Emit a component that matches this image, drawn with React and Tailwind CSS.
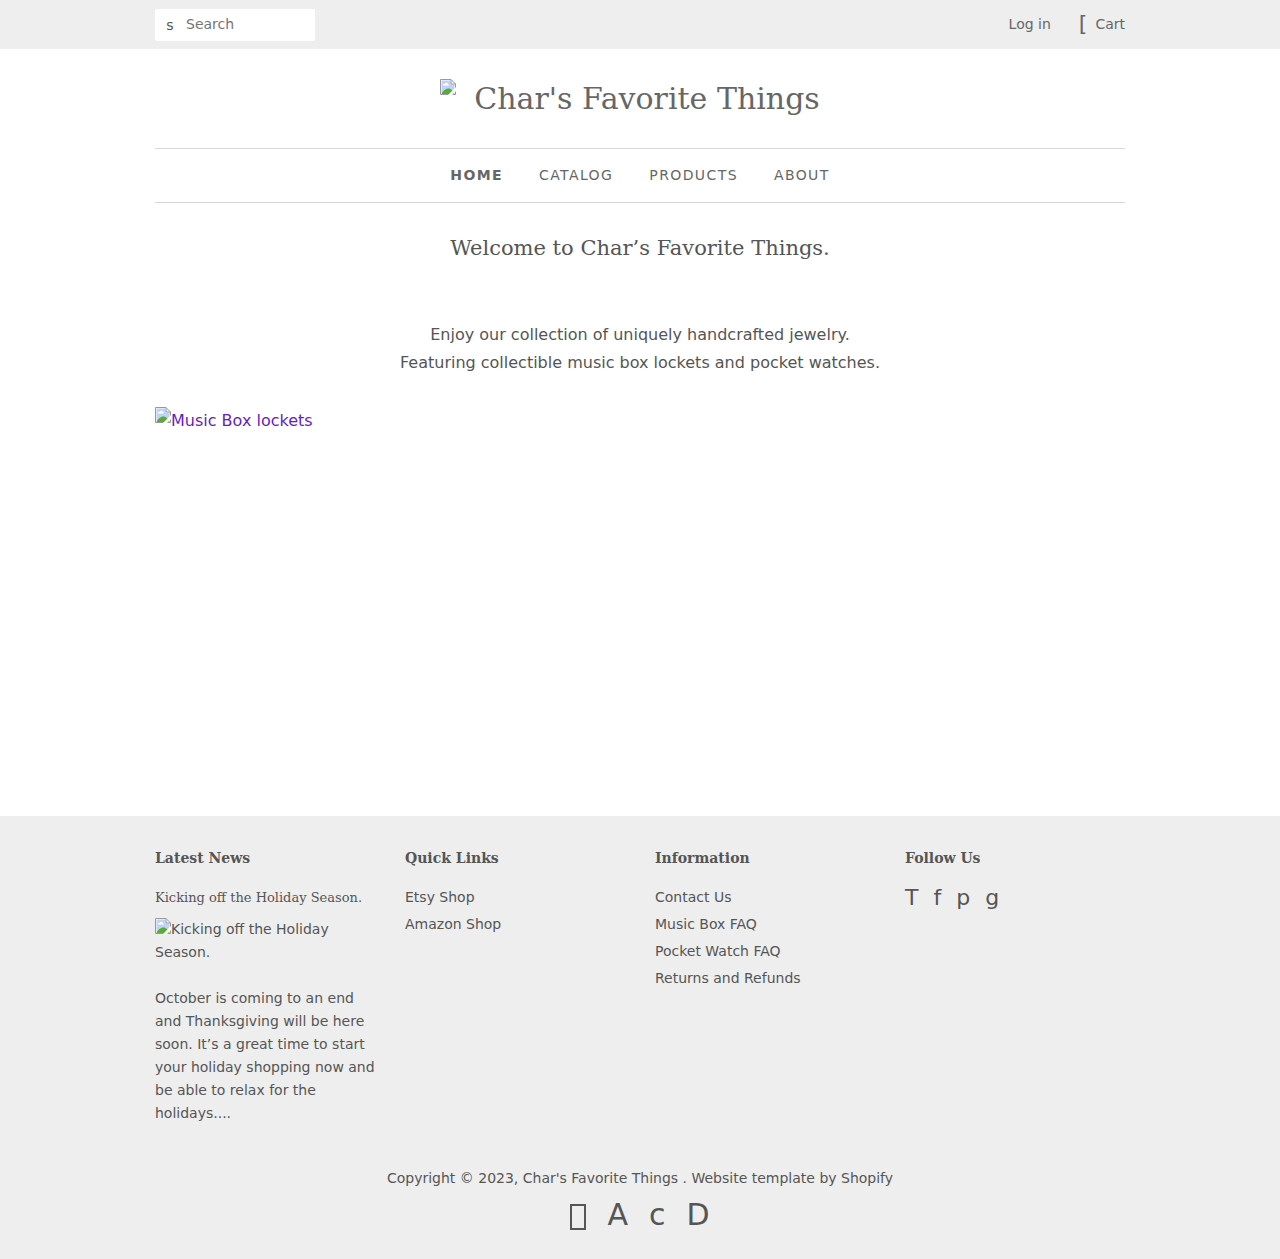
function MissingImage() {
  return (
    <svg viewBox="0 0 16 16" className="inline-block h-4 w-4 shrink-0 align-top" aria-hidden="true">
      <path d="M0 0H11L16 5V16H0Z" fill="#fff" />
      <path d="M1.5 1.5H10.5V5.5H14.5V14.5H1.5Z" fill="#c0d2f7" />
      <path d="M3 6.5C2.6 5 4 4.4 5 4.9C5.4 3.2 7.8 3.4 7.8 5C9 5 9 6.5 8.3 6.5Z" fill="#fff" />
      <path d="M1.5 15C2.5 12 5.5 9.5 8.5 9.5C11 9.5 13.5 12 14.5 15Z" fill="#57ad32" />
      <path d="M0.5 0.5H11L15.5 5V15.5H0.5Z" fill="none" stroke="#999" />
      <path d="M11 0.5V5H15.5" fill="none" stroke="#999" />
      <path d="M8 16L16 8V12L12 16Z" fill="#fff" />
    </svg>
  );
}

function FooterHeading({ children }) {
  return <h3 className='mb-4 font-["DejaVu_Serif",serif] text-sm font-bold leading-6'>{children}</h3>;
}

function LinkColumn({ title, links }) {
  return (
    <div>
      <FooterHeading>{title}</FooterHeading>
      <ul className="flex flex-col gap-1">
        {links.map((l) => (
          <li key={l}><a href="#">{l}</a></li>
        ))}
      </ul>
    </div>
  );
}

export default function App() {
  return (
    <div className='bg-white font-["DejaVu_Sans",sans-serif] text-base leading-7 text-[#555]'>
      <div className="bg-[#eee] px-4 text-sm text-[#666]">
        <div className="mx-auto flex max-w-[970px] items-center justify-between pt-[9px] pb-2">
          <form className="flex h-8 w-40 items-center rounded-xs bg-white" role="search">
            <button type="submit" aria-label="Submit search" className="w-[30px] shrink-0 text-sm leading-5 text-[#555]">s</button>
            <input type="search" aria-label="Search" placeholder="Search" className="ml-px h-8 w-full min-w-0 pb-0.5 outline-none placeholder:text-[#757575]" />
          </form>
          <nav aria-label="Account" className="flex h-8 items-center pb-0.5 leading-7">
            <a href="#">Log in</a>
            <a href="#" className="ml-7 flex items-center">
              <span aria-hidden="true" className="mr-2 text-[22px]">[</span>Cart
            </a>
          </nav>
        </div>
      </div>

      <div className="px-4">
        <div className="mx-auto max-w-[970px]">
          <header className="py-[30px]">
            <h1 className='font-["DejaVu_Serif",serif] text-[30px] leading-[39px] text-[#666]'>
              <a href="#" className="flex items-start justify-center gap-[18px]">
                <MissingImage />
                <span className="mr-5">Char's Favorite Things</span>
              </a>
            </h1>
          </header>

          <nav aria-label="Main" className="border-y border-[#d9d9d9] pt-3 pb-[13px]">
            <ul className="flex flex-wrap justify-center gap-x-9 text-sm leading-7 tracking-widest text-[#666] uppercase">
              <li><a href="#" className="font-bold" aria-current="page">Home</a></li>
              <li><a href="#">Catalog</a></li>
              <li><a href="#">Products</a></li>
              <li><a href="#">About</a></li>
            </ul>
          </nav>

          <main className="min-h-[613px] pt-[29px]">
            <h2 className='text-center font-["DejaVu_Serif",serif] text-[21px] leading-8'>Welcome to Char’s Favorite Things.</h2>
            <p className="mt-[57px] text-center">
              Enjoy our collection of uniquely handcrafted jewelry.<br />
              Featuring collectible music box lockets and pocket watches.
            </p>
            <a href="#" className="mt-[30px] inline-flex items-start text-[#6a1cc0]">
              <MissingImage />
              <span>Music Box lockets</span>
            </a>
          </main>
        </div>
      </div>

      <footer className="bg-[#eee] px-4 pt-[30px] pb-6 text-sm leading-[23px]">
        <div className="mx-auto max-w-[970px]">
          <div className="grid grid-cols-1 gap-[30px] sm:grid-cols-2 md:grid-cols-4">
            <div>
              <FooterHeading>Latest News</FooterHeading>
              <h4 className='mb-2 font-["DejaVu_Serif",serif] text-[13px] leading-6 whitespace-nowrap'><a href="#">Kicking off the Holiday Season.</a></h4>
              <p><MissingImage />Kicking off the Holiday Season.</p>
              <p className="mt-[23px]">
                October is coming to an end and Thanksgiving will be here soon. It’s a great time to start your holiday shopping now and be able to relax for the holidays....
              </p>
            </div>
            <LinkColumn title="Quick Links" links={["Etsy Shop", "Amazon Shop"]} />
            <LinkColumn title="Information" links={["Contact Us", "Music Box FAQ", "Pocket Watch FAQ", "Returns and Refunds"]} />
            <div>
              <FooterHeading>Follow Us</FooterHeading>
              <ul className="flex gap-[15px] text-[22px]">
                <li><a href="#" aria-label="Twitter">T</a></li>
                <li><a href="#" aria-label="Facebook">f</a></li>
                <li><a href="#" aria-label="Pinterest">p</a></li>
                <li><a href="#" aria-label="Google Plus">g</a></li>
              </ul>
            </div>
          </div>
          <p className="mt-[42px] text-center">
            Copyright © 2023, <a href="#">Char's Favorite Things</a> . <a href="#">Website template by Shopify</a>
          </p>
          <ul aria-label="Payment methods" className="mt-[5px] flex items-center justify-center gap-[21px] text-[30px] leading-10">
            <li className="mt-1 h-[26px] w-4 border-2 border-[#555]" />
            <li>A</li>
            <li>c</li>
            <li>D</li>
          </ul>
        </div>
      </footer>
    </div>
  );
}
